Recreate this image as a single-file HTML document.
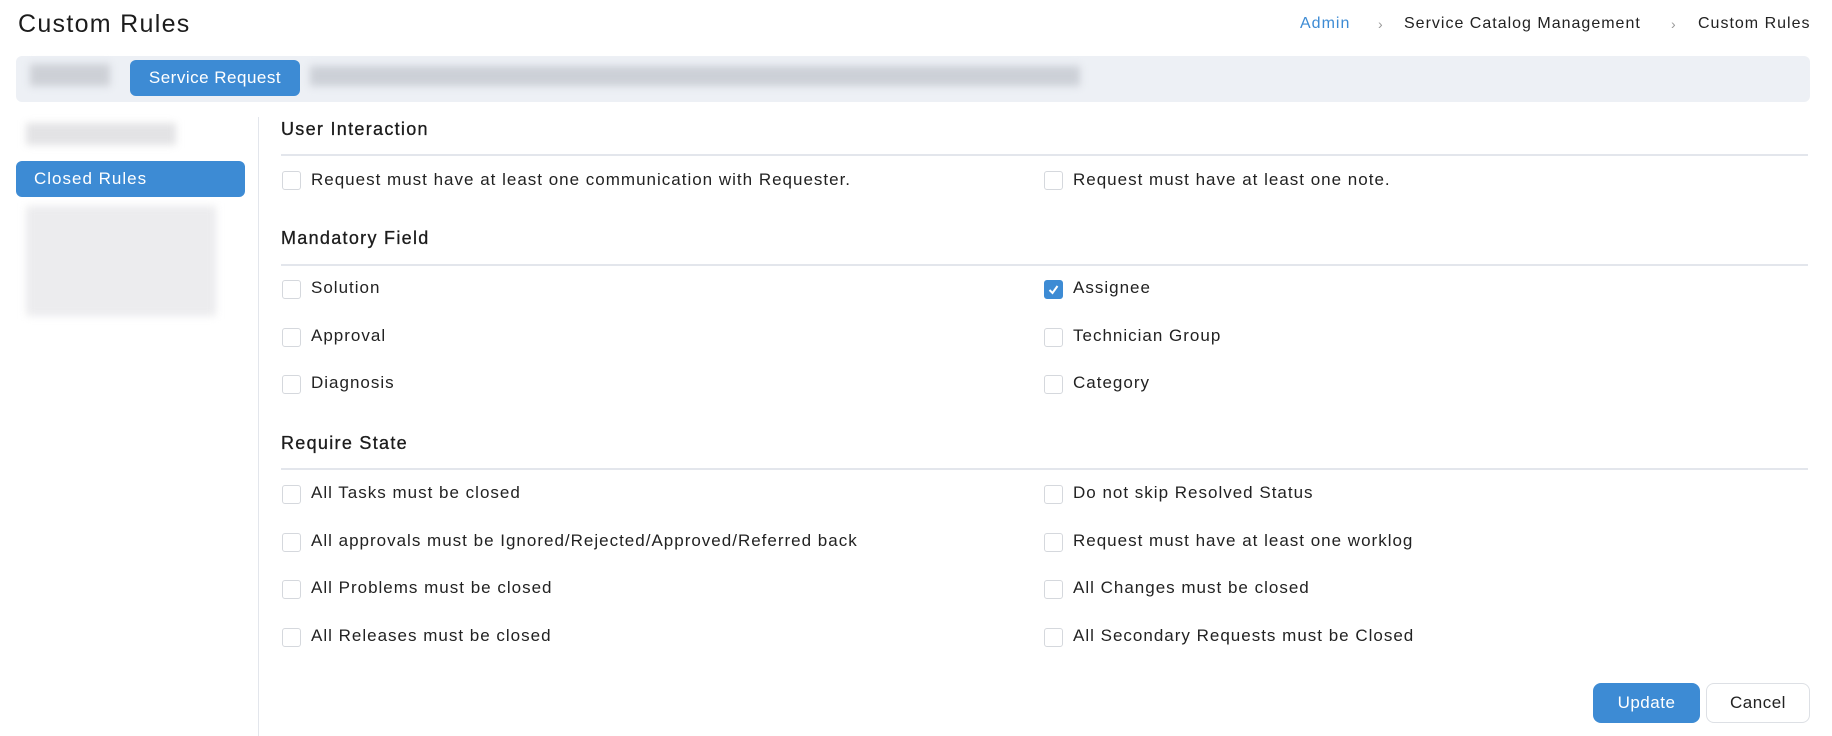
<!DOCTYPE html>
<html><head><style>
body{margin:0;width:1832px;height:736px;background:#fff;font-family:"Liberation Sans",sans-serif;color:#222;position:relative;overflow:hidden;letter-spacing:1px}
.a{position:absolute;white-space:nowrap}
.blur{position:absolute;background:#c8ccd3;filter:blur(4px)}
.cb{position:absolute;width:17px;height:17px;border:1px solid #d5d8dd;border-radius:3px;background:#fff}
.cb.on{background:#3d8bd4;border-color:#3d8bd4}
.lbl{position:absolute;font-size:17px;color:#222;white-space:nowrap}
.h{position:absolute;font-size:18px;color:#1c1c1c;letter-spacing:1.3px;-webkit-text-stroke:0.3px #1c1c1c}
.line{position:absolute;left:281px;width:1527px;height:2px;background:#e3e6ec}
</style></head><body>
<div class="a" style="left:18px;top:10px;font-size:25px;color:#1c1c1c;letter-spacing:1.3px">Custom Rules</div>
<div class="a" style="left:1300px;top:15px;font-size:16px;color:#3d8bd4">Admin</div>
<div class="a" style="left:1378px;top:16px;font-size:14px;color:#999">›</div>
<div class="a" style="left:1404px;top:15px;font-size:16px">Service Catalog Management</div>
<div class="a" style="left:1671px;top:16px;font-size:14px;color:#999">›</div>
<div class="a" style="left:1698px;top:15px;font-size:16px">Custom Rules</div>

<div class="a" style="left:16px;top:56px;width:1794px;height:46px;background:#edf0f5;border-radius:6px"></div>
<div class="blur" style="left:30px;top:64px;width:80px;height:22px;background:#cdd0d6"></div>
<div class="a" style="left:130px;top:60px;width:170px;height:36px;background:#3d8bd4;border-radius:6px;color:#fff;font-size:17px;line-height:36px;text-align:center;letter-spacing:0.5px">Service Request</div>
<div class="blur" style="left:310px;top:66px;width:770px;height:20px;background:#ccd0d7"></div>

<div class="blur" style="left:26px;top:123px;width:150px;height:22px;background:#e3e3e5"></div>
<div class="a" style="left:16px;top:161px;width:229px;height:36px;background:#3d8bd4;border-radius:6px;color:#fff;font-size:17px;line-height:36px;padding-left:18px;box-sizing:border-box">Closed Rules</div>
<div class="blur" style="left:26px;top:206px;width:190px;height:110px;background:#ececee"></div>
<div class="a" style="left:258px;top:117px;width:1px;height:619px;background:#e3e6ec"></div>

<div class="h" style="left:281px;top:119px">User Interaction</div>
<div class="line" style="top:154px"></div>
<div class="cb" style="left:282px;top:171px"></div><div class="lbl" style="left:311px;top:170px">Request must have at least one communication with Requester.</div>
<div class="cb" style="left:1044px;top:171px"></div><div class="lbl" style="left:1073px;top:170px">Request must have at least one note.</div>

<div class="h" style="left:281px;top:228px">Mandatory Field</div>
<div class="line" style="top:264px"></div>
<div class="cb" style="left:282px;top:280px"></div><div class="lbl" style="left:311px;top:278px">Solution</div>
<div class="cb on" style="left:1044px;top:280px"><svg width="17" height="17" viewBox="0 0 17 17"><path d="M4.5 9l3 3 5-7" stroke="#fff" stroke-width="2" fill="none"/></svg></div><div class="lbl" style="left:1073px;top:278px">Assignee</div>
<div class="cb" style="left:282px;top:328px"></div><div class="lbl" style="left:311px;top:326px">Approval</div>
<div class="cb" style="left:1044px;top:328px"></div><div class="lbl" style="left:1073px;top:326px">Technician Group</div>
<div class="cb" style="left:282px;top:375px"></div><div class="lbl" style="left:311px;top:373px">Diagnosis</div>
<div class="cb" style="left:1044px;top:375px"></div><div class="lbl" style="left:1073px;top:373px">Category</div>

<div class="h" style="left:281px;top:433px">Require State</div>
<div class="line" style="top:468px"></div>
<div class="cb" style="left:282px;top:485px"></div><div class="lbl" style="left:311px;top:483px">All Tasks must be closed</div>
<div class="cb" style="left:1044px;top:485px"></div><div class="lbl" style="left:1073px;top:483px">Do not skip Resolved Status</div>
<div class="cb" style="left:282px;top:533px"></div><div class="lbl" style="left:311px;top:531px">All approvals must be Ignored/Rejected/Approved/Referred back</div>
<div class="cb" style="left:1044px;top:533px"></div><div class="lbl" style="left:1073px;top:531px">Request must have at least one worklog</div>
<div class="cb" style="left:282px;top:580px"></div><div class="lbl" style="left:311px;top:578px">All Problems must be closed</div>
<div class="cb" style="left:1044px;top:580px"></div><div class="lbl" style="left:1073px;top:578px">All Changes must be closed</div>
<div class="cb" style="left:282px;top:628px"></div><div class="lbl" style="left:311px;top:626px">All Releases must be closed</div>
<div class="cb" style="left:1044px;top:628px"></div><div class="lbl" style="left:1073px;top:626px">All Secondary Requests must be Closed</div>

<div class="a" style="left:1593px;top:683px;width:107px;height:40px;background:#3d8bd4;border-radius:8px;color:#fff;font-size:17px;line-height:40px;text-align:center;letter-spacing:0.5px">Update</div>
<div class="a" style="left:1706px;top:683px;width:102px;height:38px;border:1px solid #dde0e5;border-radius:8px;font-size:17px;line-height:38px;text-align:center;letter-spacing:0.5px">Cancel</div>
</body></html>
